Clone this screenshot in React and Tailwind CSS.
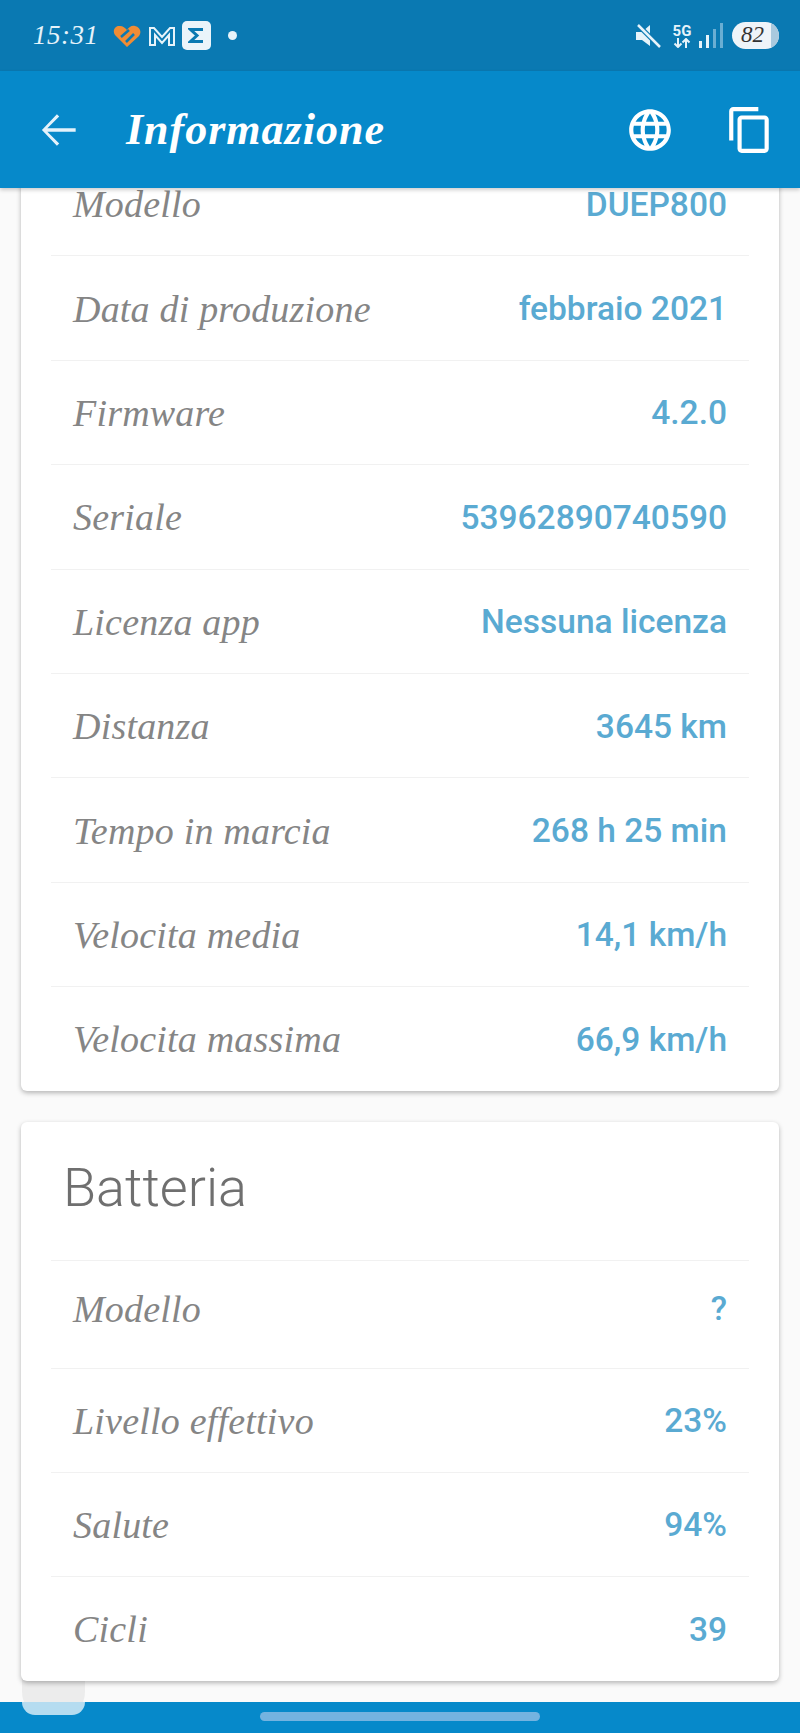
import React from 'react';

const handFont = "font-['Liberation_Serif',serif] italic";

const deviceRows = [
    { label: 'Modello', value: 'DUEP800' },
    { label: 'Data di produzione', value: 'febbraio 2021' },
    { label: 'Firmware', value: '4.2.0' },
    { label: 'Seriale', value: '53962890740590' },
    { label: 'Licenza app', value: 'Nessuna licenza' },
    { label: 'Distanza', value: '3645 km' },
    { label: 'Tempo in marcia', value: '268 h 25 min' },
    { label: 'Velocita media', value: '14,1 km/h' },
    { label: 'Velocita massima', value: '66,9 km/h' },
];

const batteryRows = [
    { label: 'Modello', value: '?', tall: true },
    { label: 'Livello effettivo', value: '23%' },
    { label: 'Salute', value: '94%' },
    { label: 'Cicli', value: '39' },
];

const InfoRow = ({ label, value, last, tall }) => (
    <div className={`flex items-center justify-between px-[22px] ${tall ? 'h-[108px] pb-[9px]' : last ? 'h-[103.4px] pt-[2px]' : 'h-[104.4px] pt-[2px]'} ${last ? '' : 'border-b border-[#f1f1f1]'}`}>
        <span className={`${handFont} text-[38px] tracking-[0.2px] text-[#858585]`}>{label}</span>
        <span className="font-['Roboto',sans-serif] text-[33.5px] font-medium text-[#5aaad2]">{value}</span>
    </div>
);

const StatusBar = () => (
    <div className="flex h-[71px] shrink-0 items-center justify-between bg-[#0a79b2] pl-[33px] pr-[21px]">
        <div className="flex items-center">
            <span className={`${handFont} w-[63px] text-[27px] tracking-[0.5px] text-[#e6f3fa]`}>15:31</span>
            <svg width="28" height="24" viewBox="0 0 28 24" className="ml-[17px]">
                <path d="M14 23 2 11C-1 7 2 1 7 2c3 0 5 2 7 4 2-3 5-5 8-4 5 1 7 6 4 10Z" fill="#ef8c35" />
                <path d="m8 13 8-7M13 18l8-8" stroke="#0a79b2" strokeWidth="2.5" />
            </svg>
            <svg width="28" height="22" viewBox="0 0 28 22" className="ml-[7px]">
                <path d="M2 20V3h4l8 9 8-9h4v17h-5V10l-7 8-7-8v10Z" fill="none" stroke="#e6f3fa" strokeWidth="2" />
            </svg>
            <div className="ml-[6px] flex h-[29px] w-[29px] items-center justify-center rounded-[5px] bg-[#eaf4fa]">
                <svg width="17" height="17" viewBox="0 0 17 17">
                    <path d="M15 2.5H2.5L9 8.5l-6.500 6H15" fill="none" stroke="#0a79b2" strokeWidth="3" />
                </svg>
            </div>
            <div className="ml-[17px] h-[9px] w-[9px] rounded-full bg-[#e6f3fa]" />
        </div>
        <div className="flex items-center">
            <svg width="26" height="26" viewBox="0 0 26 26" fill="#e6f3fa">
                <path d="M1 9h6l8-7v21l-8-6H1Z" />
                <path d="M3 2 25 24" stroke="#0a79b2" strokeWidth="5" />
                <path d="M3 2 25 24" stroke="#e6f3fa" strokeWidth="2.500" />
            </svg>
            <div className="ml-[9px] flex w-[24px] flex-col items-center text-[#e6f3fa]">
                <span className="font-['Roboto',sans-serif] text-[15px] font-bold leading-[14px]">5G</span>
                <svg width="18" height="10" viewBox="0 0 18 10" fill="none" stroke="#e6f3fa" strokeWidth="2">
                    <path d="M5 0v9M1.500 5.500 5 9l3.500-3.500M13 10V1M9.500 4.500 13 1l3.500 3.500" />
                </svg>
            </div>
            <div className="ml-[5px] flex h-[25px] items-end gap-[4px]">
                <div className="h-[7px] w-[3px] bg-[#e6f3fa]" />
                <div className="h-[13px] w-[3px] bg-[#e6f3fa]" />
                <div className="h-[19px] w-[3px] bg-[#6aaed3]" />
                <div className="h-[25px] w-[3px] bg-[#6aaed3]" />
            </div>
            <div className="relative ml-[9px] flex h-[27px] w-[47px] items-center justify-center overflow-hidden rounded-full bg-[#eef4f9] pr-[6px]">
                <span className={`${handFont} text-[23px] text-[#333]`}>82</span>
                <div className="absolute inset-y-0 right-0 w-[8px] bg-[#a9c9de]" />
            </div>
        </div>
    </div>
);

const AppBar = () => (
    <div className="relative z-10 flex h-[117px] shrink-0 items-center bg-[#0689ca] shadow-[0_2px_4px_rgba(0,0,0,0.2)]">
        <svg width="50" height="50" viewBox="0 0 24 24" fill="#e3f2fb" className="ml-[34px]">
            <path d="M20 11.200H6.400l5.700-5.700L11 4.400 3.800 12l7.200 7.600 1.100-1.100-5.700-5.700H20z" />
        </svg>
        <span className={`${handFont} ml-[42px] text-[44px] font-bold tracking-[1px] text-white`}>Informazione</span>
        <svg width="50" height="50" viewBox="0 0 24 24" fill="#fff" className="ml-auto">
            <path d="M11.990 2C6.470 2 2 6.480 2 12s4.470 10 9.990 10C17.520 22 22 17.520 22 12S17.520 2 11.990 2zm6.930 6h-2.950c-.32-1.250-.78-2.450-1.380-3.560 1.840.63 3.370 1.910 4.330 3.560zM12 4.040c.83 1.200 1.480 2.530 1.910 3.960h-3.820c.43-1.430 1.080-2.760 1.910-3.960zM4.260 14C4.100 13.360 4 12.690 4 12s.1-1.360.26-2h3.380c-.08.66-.14 1.320-.14 2 0 .68.06 1.340.14 2H4.260zm.82 2h2.950c.32 1.250.78 2.450 1.380 3.560-1.840-.63-3.370-1.900-4.330-3.560zm2.950-8H5.080c.96-1.660 2.490-2.930 4.330-3.560C8.810 5.550 8.350 6.750 8.030 8zM12 19.960c-.83-1.200-1.480-2.530-1.910-3.960h3.820c-.43 1.430-1.080 2.760-1.910 3.960zM14.340 14H9.660c-.09-.66-.16-1.320-.16-2 0-.68.07-1.350.16-2h4.680c.09.65.16 1.320.16 2 0 .68-.07 1.340-.16 2zm.25 5.560c.6-1.110 1.060-2.310 1.380-3.560h2.950c-.96 1.650-2.490 2.930-4.330 3.560zM16.360 14c.08-.66.14-1.320.14-2 0-.68-.06-1.340-.14-2h3.380c.16.64.26 1.310.26 2s-.1 1.360-.26 2h-3.380z" />
        </svg>
        <svg width="50" height="50" viewBox="0 0 24 24" fill="#fff" className="ml-[50px] mr-[25px]">
            <path d="M16 1H4c-1.100 0-2 .9-2 2v14h2V3h12V1zm3 4H8c-1.100 0-2 .9-2 2v14c0 1.100.9 2 2 2h11c1.100 0 2-.9 2-2V7c0-1.100-.9-2-2-2zm0 16H8V7h11v14z" />
        </svg>
    </div>
);

export default function App() {
    return (
        <div className="relative flex h-[1733px] w-[800px] flex-col overflow-hidden bg-[#fafafa]">
            <StatusBar />
            <AppBar />

            <main className="flex-1 overflow-hidden px-[21px]">
                {/* Device card, scrolled under the app bar */}
                <section className="-mt-[36px] rounded-[6px] bg-white px-[30px] shadow-[0_2px_5px_rgba(0,0,0,0.28)]">
                    {deviceRows.map((row, i) => (
                        <InfoRow key={row.label} {...row} last={i === deviceRows.length - 1} />
                    ))}
                </section>

                {/* Battery card */}
                <section className="relative z-[1] mt-[31px] rounded-[6px] bg-white px-[30px] shadow-[0_2px_5px_rgba(0,0,0,0.28)]">
                    <h2 className="flex h-[139px] items-center border-b border-[#f1f1f1] pb-[7px] pl-[12px] font-['Roboto',sans-serif] text-[54px] font-light text-[#6f6f6f]">
                        Batteria
                    </h2>
                    {batteryRows.map((row, i) => (
                        <InfoRow key={row.label} {...row} last={i === batteryRows.length - 1} />
                    ))}
                </section>
            </main>

            {/* Floating assistive bubble, half hidden behind the card */}
            <div className="absolute left-[22px] top-[1660px] h-[60px] w-[63px] rounded-b-[28px] bg-[#ececec]" />

            <div className="relative flex h-[31px] shrink-0 items-center justify-center bg-[#0689ca]">
                <div className="absolute left-[22px] top-0 h-[13px] w-[63px] rounded-b-[26px] bg-[#b5dcf0]" />
                <div className="mb-[2px] h-[9px] w-[280px] rounded-full bg-[#74b3e0]" />
            </div>
        </div>
    );
}
